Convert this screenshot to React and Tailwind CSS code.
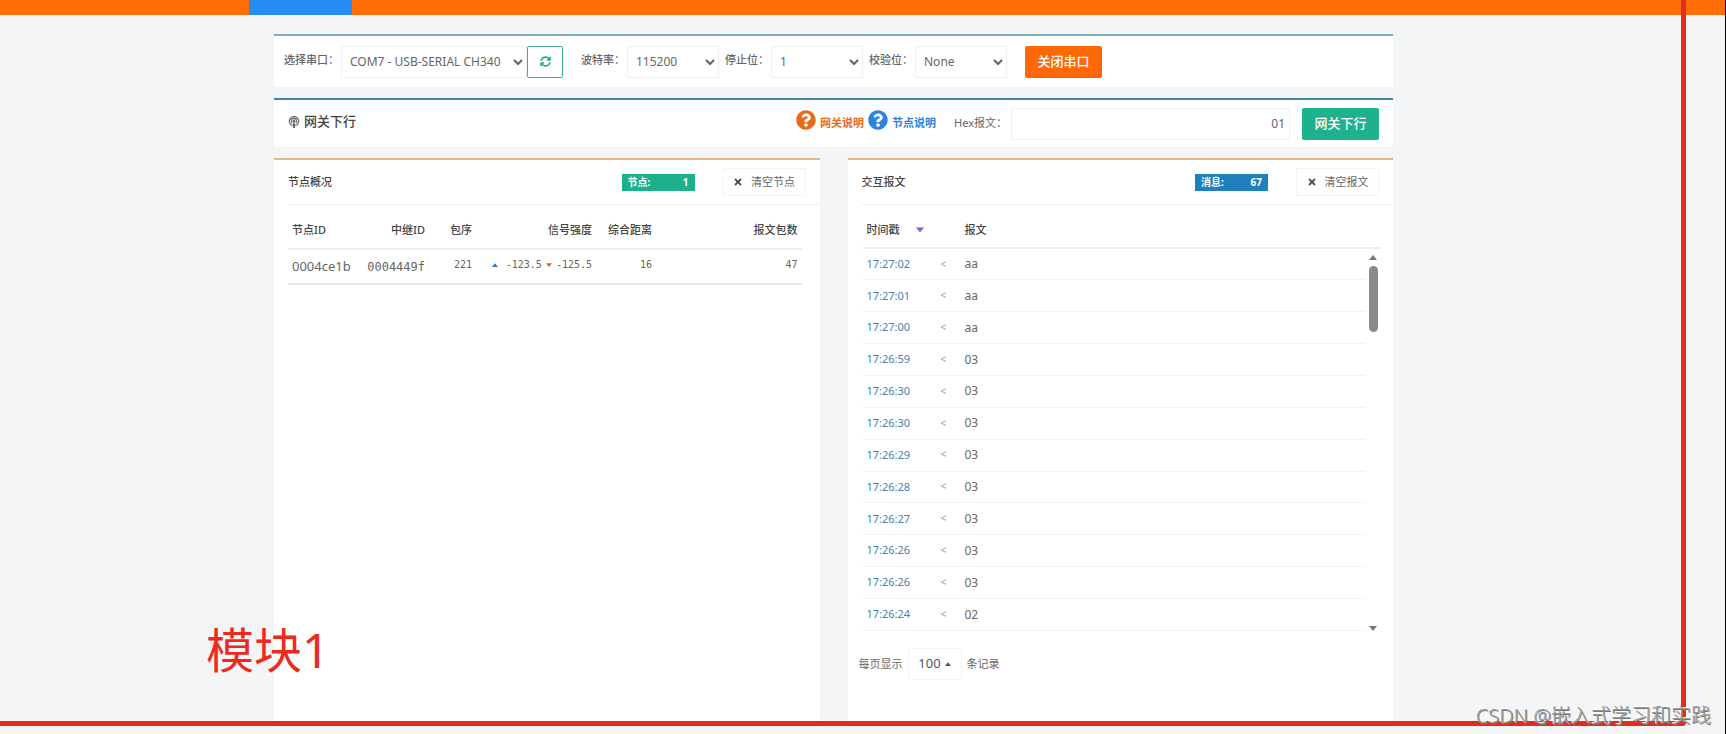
import React, { useState } from 'react';
import { FaPodcast, FaQuestionCircle, FaSyncAlt, FaTimes } from 'react-icons/fa';

// --- Data ---
const nodes = [
  { id: '0004ce1b', relay: '0004449f', seq: 221, up: '-123.5', down: '-125.5', distance: 16, packets: 47 },
];

const messages = [
  { time: '17:27:02', text: 'aa' },
  { time: '17:27:01', text: 'aa' },
  { time: '17:27:00', text: 'aa' },
  { time: '17:26:59', text: '03' },
  { time: '17:26:30', text: '03' },
  { time: '17:26:30', text: '03' },
  { time: '17:26:29', text: '03' },
  { time: '17:26:28', text: '03' },
  { time: '17:26:27', text: '03' },
  { time: '17:26:26', text: '03' },
  { time: '17:26:26', text: '03' },
  { time: '17:26:24', text: '02' },
];

// --- Small pieces ---
function Triangle({ down, className }) {
  return (
    <svg viewBox="0 0 8 5" className={className} fill="currentColor" aria-hidden="true">
      <path d={down ? 'M0 0h8L4 5z' : 'M0 5h8L4 0z'} />
    </svg>
  );
}

function Field({ id, label, value, options, className, onChange }) {
  return (
    <div className="flex items-center gap-0.5">
      <label htmlFor={id} className="pb-0.5 text-[11px] font-medium whitespace-nowrap">{label}</label>
      <select
        id={id}
        value={value}
        onChange={(e) => onChange(e.target.value)}
        className={`h-8 border border-[#eeeff5] bg-white pl-1 text-xs text-[#666] ${className}`}
      >
        {options.map(o => <option key={o}>{o}</option>)}
      </select>
    </div>
  );
}

function PanelHead({ title, badge, count, badgeClass, clearLabel, onClear }) {
  return (
    <div className="ml-3.5 flex h-[45px] items-center border-b border-[#ededed] pr-3.5">
      <h2 className="grow text-[11px] font-medium text-[#444]">{title}</h2>
      <span className={`flex h-[17px] w-[73px] items-center justify-between px-1.5 text-[10px] font-bold text-white ${badgeClass}`}>
        <span>{badge}</span>
        <span>{count}</span>
      </span>
      <button
        type="button"
        onClick={onClear}
        className="ml-7 flex h-7 w-[83px] items-center justify-center gap-2 border border-[#f3f3f3] text-[11px] text-[#666]"
      >
        <FaTimes className="size-2.5 text-[#444]" />
        {clearLabel}
      </button>
    </div>
  );
}

// --- Main Parent Component: App ---
function App() {
  const [port, setPort] = useState('COM7 - USB-SERIAL CH340');
  const [baud, setBaud] = useState('115200');
  const [stopBits, setStopBits] = useState('1');
  const [parity, setParity] = useState('None');
  const [hex, setHex] = useState('01');
  const [nodeList, setNodeList] = useState(nodes);
  const [messageList, setMessageList] = useState(messages);

  return (
    <div className="relative flex min-h-screen flex-col overflow-hidden border-r border-black bg-[#f4f5f6] pb-3 font-['Noto_Sans','Noto_Sans_CJK_SC',sans-serif] text-[#666]">
      <header className="h-[15px] bg-[#ff6c08] pl-[249px]">
        <div className="h-full w-[103px] bg-[#268df5]"></div>
      </header>

      <main className="mr-[332px] ml-[274px] flex grow flex-col pt-[19px]">
        {/* Serial port settings */}
        <section className="flex h-[53px] items-center border-t-2 border-[#7fb0b8] bg-white pr-4 pl-2.5">
          <Field id="port" label="选择串口：" value={port} options={['COM7 - USB-SERIAL CH340']} className="w-[186px]" onChange={setPort} />
          <button type="button" aria-label="刷新" className="mr-[18px] flex h-8 w-9 items-center justify-center rounded-xs border border-[#45ae98] text-[#24ae8b]">
            <FaSyncAlt className="size-[11px]" />
          </button>
          <div className="flex gap-1.5">
            <Field id="baud" label="波特率：" value={baud} options={['115200', '9600']} className="w-[92px]" onChange={setBaud} />
            <Field id="stop" label="停止位：" value={stopBits} options={['1', '2']} className="w-[92px]" onChange={setStopBits} />
            <Field id="parity" label="校验位：" value={parity} options={['None', 'Odd', 'Even']} className="w-[92px]" onChange={setParity} />
          </div>
          <button type="button" className="ml-[18px] h-8 w-[77px] rounded-xs bg-[#fe6906] text-[13px] font-medium text-white">关闭串口</button>
        </section>

        {/* Gateway downlink */}
        <section className="mt-[11px] flex h-[49px] items-center border-t-2 border-[#3c86ab] bg-white pr-3.5 pl-3.5">
          <h2 className="flex grow items-center gap-1 pb-1 text-[13px] font-medium text-[#444]">
            <FaPodcast className="size-3 text-[#666]" />
            网关下行
          </h2>
          <div className="flex items-center gap-1 text-[11px] font-bold">
            <a href="#gateway" className="flex items-center gap-1 text-[#ea6a1c]">
              <FaQuestionCircle className="mb-2 size-5" />
              网关说明
            </a>
            <a href="#node" className="flex items-center gap-1 text-[#2b82e0]">
              <FaQuestionCircle className="mb-2 size-5" />
              节点说明
            </a>
          </div>
          <label htmlFor="hex" className="mr-1 ml-[18px] text-[11px]">Hex报文：</label>
          <input
            id="hex"
            type="text"
            value={hex}
            onChange={(e) => setHex(e.target.value)}
            className="h-8 w-[279px] border border-[#eef1f6] px-1 text-right text-xs text-[#666]"
          />
          <button type="button" className="ml-3 h-8 w-[77px] rounded-xs bg-[#1eb18d] text-[13px] font-medium text-white">网关下行</button>
        </section>

        <div className="mt-[11px] flex grow gap-7">
          {/* Nodes */}
          <section className="flex-1 border-t-2 border-[#e2b78c] bg-white">
            <PanelHead title="节点概况" badge="节点:" count={nodeList.length} badgeClass="bg-[#1eaf8d]" clearLabel="清空节点" onClear={() => setNodeList([])} />
            <div className="pr-[18px] pl-3.5">
              <table className="w-full table-fixed text-right text-[11px]">
                <colgroup>
                  <col className="w-[66px]" />
                  <col className="w-[75px]" />
                  <col className="w-[47px]" />
                  <col className="w-[120px]" />
                  <col className="w-[60px]" />
                  <col />
                </colgroup>
                <thead>
                  <tr className="h-11 border-b-2 border-[#ededed] text-[#444] [&>th]:px-1 [&>th]:pt-2 [&>th]:font-medium">
                    <th className="text-left">节点ID</th>
                    <th>中继ID</th>
                    <th>包序</th>
                    <th>信号强度</th>
                    <th>综合距离</th>
                    <th>报文包数</th>
                  </tr>
                </thead>
                <tbody className="font-['DejaVu_Sans_Mono',monospace] text-[10px]">
                  {nodeList.map(node => (
                    <tr key={node.id} className="h-[35px] border-b-2 border-[#e6e6e6] whitespace-nowrap [&>td]:px-1 [&>td]:pb-1">
                      <td className="pt-1 text-left font-['Noto_Sans',sans-serif] text-[13px]">{node.id}</td>
                      <td className="pt-1 text-xs">{node.relay}</td>
                      <td>{node.seq}</td>
                      <td>
                        <span className="flex items-center justify-end gap-1">
                          <Triangle className="mr-1 h-1 w-1.5 text-[#2b78d0]" />
                          {node.up}
                          <Triangle down className="h-1 w-1.5 text-[#d9661f]" />
                          {node.down}
                        </span>
                      </td>
                      <td>{node.distance}</td>
                      <td>{node.packets}</td>
                    </tr>
                  ))}
                </tbody>
              </table>
            </div>
          </section>

          {/* Messages */}
          <section className="flex-1 border-t-2 border-[#e2b78c] bg-white">
            <PanelHead title="交互报文" badge="消息:" count={67} badgeClass="bg-[#1f80bd]" clearLabel="清空报文" onClear={() => setMessageList([])} />
            <div className="pr-3 pl-[15px]">
              <div className="flex h-11 items-center border-b-2 border-[#ededed] pt-2 pl-1 text-[11px] font-medium text-[#444]">
                <span className="flex w-[98px] items-center gap-4">
                  时间戳
                  <Triangle down className="h-1.5 w-2 text-[#7565c9]" />
                </span>
                <span>报文</span>
              </div>
              <div className="flex h-[382px]">
                <table className="h-full grow table-fixed text-xs">
                  <colgroup>
                    <col className="w-[72px]" />
                    <col className="w-[26px]" />
                    <col />
                  </colgroup>
                  <tbody>
                    {messageList.map((msg, index) => (
                      <tr key={index} className="border-b border-[#f3f3f3]">
                        <td className="pl-1 text-[11px] text-[#4380b5]">{msg.time}</td>
                        <td className="pl-1.5 text-[10px] text-[#b58d85]">&lt;</td>
                        <td className="pl-1">{msg.text}</td>
                      </tr>
                    ))}
                  </tbody>
                </table>
                <div className="flex w-4 flex-col items-center gap-1.5 pt-1.5 text-[#777]">
                  <Triangle className="h-[5px] w-2 shrink-0" />
                  <div className="h-[66px] w-[9px] rounded-full bg-[#8a8a8a]"></div>
                  <Triangle down className="mt-auto h-[5px] w-2 shrink-0" />
                </div>
              </div>
            </div>
            <div className="mt-[17px] flex items-center pl-[11px] text-[11px]">
              <span>每页显示</span>
              <button type="button" className="mx-[5px] flex h-8 w-[54px] items-center justify-center gap-1 border border-[#f5f5f8] text-[13px] text-[#555]">
                100
                <Triangle className="h-1 w-1.5" />
              </button>
              <span>条记录</span>
            </div>
          </section>
        </div>
      </main>

      {/* Annotation frame, its caption and the author mark lie over the page */}
      <div className="pointer-events-none absolute top-0 right-[39px] bottom-2 left-0 rounded-br-sm border-r-[5px] border-b-[5px] border-[#e52a20]"></div>
      <div className="pointer-events-none absolute bottom-15 left-[206px] text-5xl text-[#ee2a1e]">模块1</div>
      <div className="pointer-events-none absolute right-3.5 bottom-1 text-xl leading-7 font-light text-[#999] text-shadow-[1px_1px_0_#777,-1px_-1px_0_#fff]">CSDN @嵌入式学习和实践</div>
    </div>
  );
}

export default App;
